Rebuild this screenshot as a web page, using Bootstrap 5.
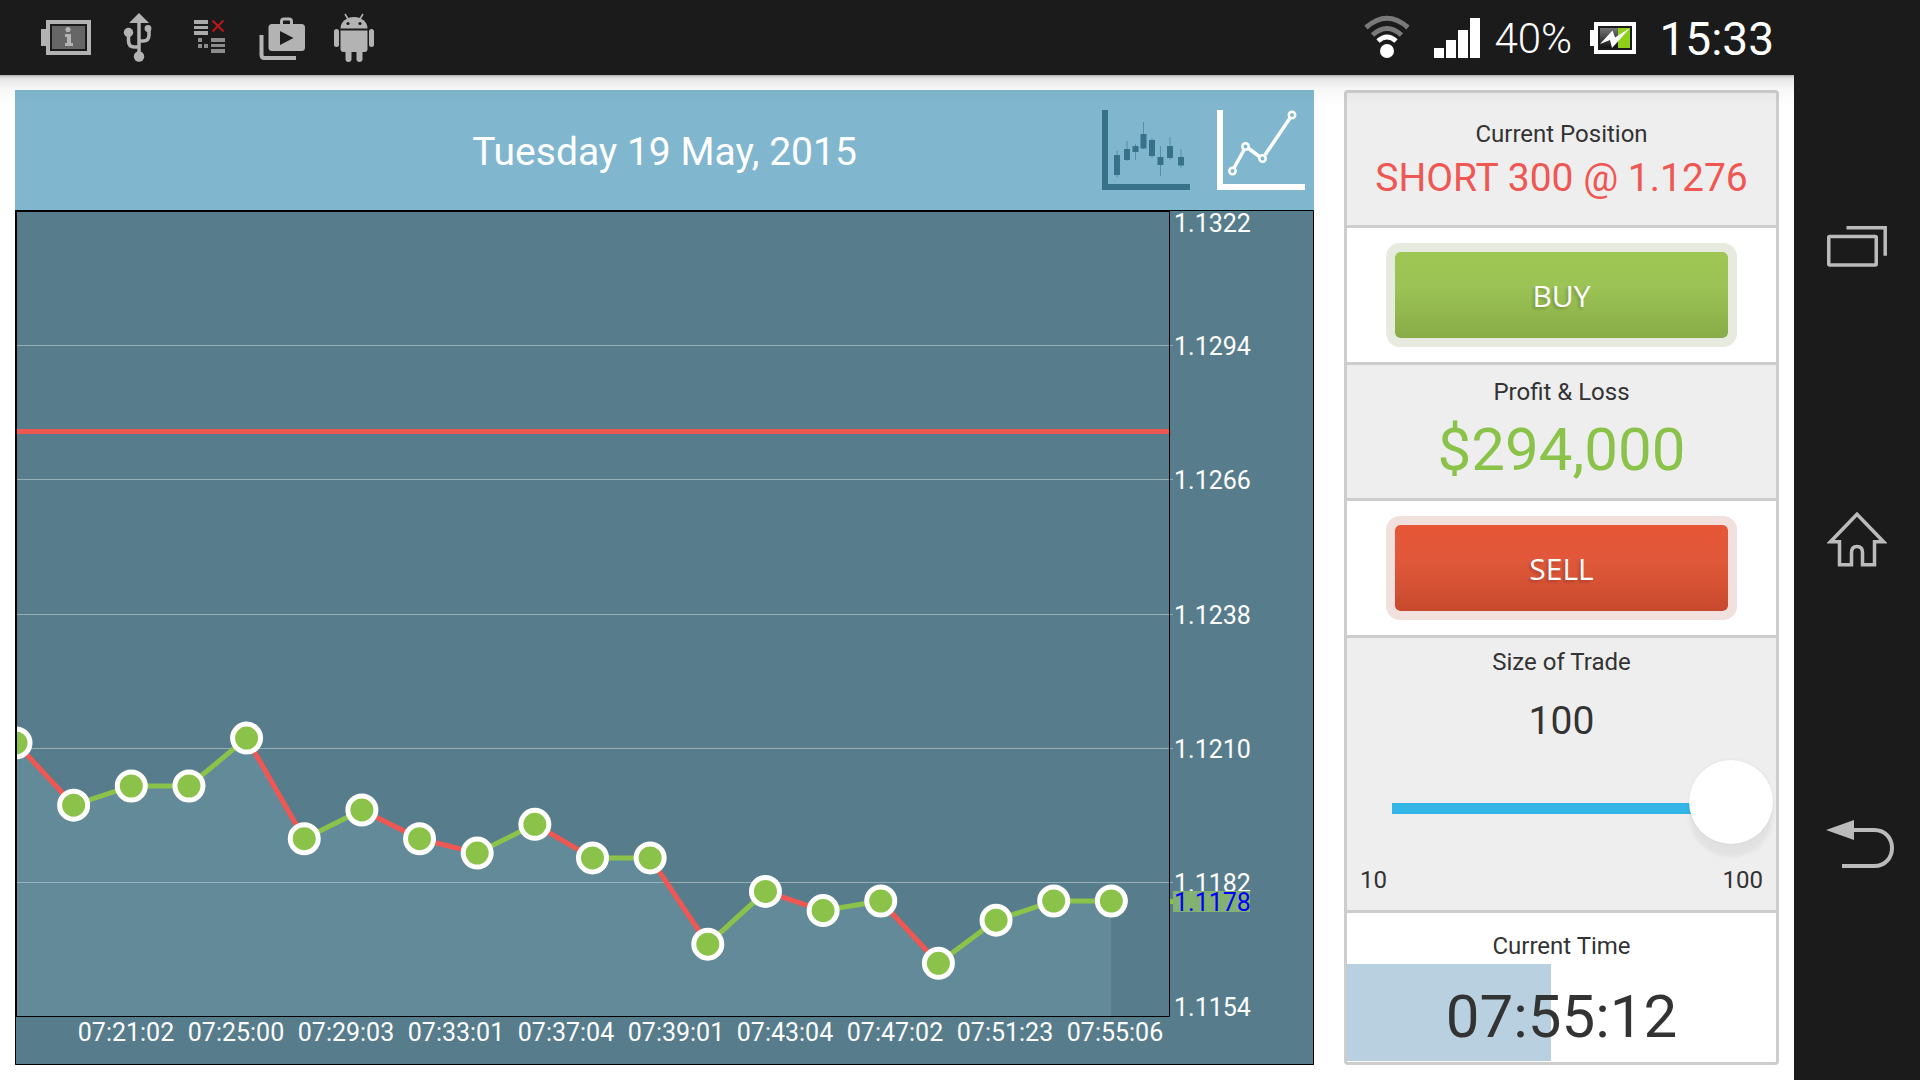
<!DOCTYPE html>
<html lang="en">
<head>
<meta charset="utf-8">
<meta name="viewport" content="width=device-width, initial-scale=1">
<title>Trading</title>
<link href="https://cdn.jsdelivr.net/npm/bootstrap@5.3.0/dist/css/bootstrap.min.css" rel="stylesheet">
<style>
  body { font-family: Roboto, "Liberation Sans", sans-serif; color: #333; background: #fff; }
  svg { display: block; }
  .system-dark { background: #1b1b1b; }
  .status-bar { height: 75px; color: #fff; padding-left: 30px; padding-right: 20px; }
  .battery-text { font-size: 42px; line-height: 48px; width: 77px; font-weight: 300; padding-top: 3px; }
  .clock-text { font-size: 46px; line-height: 48px; padding-top: 3px; }
  .nav-rail { width: 126px; padding-top: 216px; padding-bottom: 196px; }
  .plain-btn { border: 0; padding: 0; background: none; }
  .workspace { padding: 15px; gap: 30px; }
  .workspace::before {
    content: ""; position: absolute; left: 0; right: 0; top: 0; height: 30px; z-index: 2; pointer-events: none;
    background: linear-gradient(rgba(0,0,0,.3), rgba(0,0,0,.1) 3px, rgba(0,0,0,.03) 14px, rgba(0,0,0,0));
  }
  .chart-head { height: 120px; background: #80b7ce; color: #fff; padding: 0 9px; }
  .chart-title { font-size: 39px; line-height: 48px; font-weight: 400; padding-top: 4px; }
  .chart-tools { gap: 27px; }
  .chart-body { background: #577d8c; min-height: 400px; }
  .chart-body svg { position: absolute; inset: 0; }
  .chart-body text { font-size: 25px; fill: #fff; }
  .side-panel { width: 435px; border: 3px solid #cdcdcd; border-radius: 4px; }
  .panel-cell { border-bottom: 3px solid #cdcdcd; }
  .panel-cell:last-child { border-bottom: 0; }
  .shaded { background: #eee; }
  .cell-label { font-size: 24px; line-height: 28px; font-weight: 400; }
  .value-md { font-size: 39px; line-height: 48px; }
  .value-lg { font-size: 60px; line-height: 60px; }
  .loss { color: #ef5753; }
  .gain { color: #8bc34a; }
  .cell-position { height: 135px; padding-top: 27px; gap: 6px; }
  .cell-action { height: 137px; }
  .cell-profit { height: 136px; padding-top: 13px; gap: 14px; }
  .cell-size { height: 275px; padding-top: 10px; }
  .cell-time { padding-top: 19px; gap: 4px; }
  .btn-trade {
    width: 351px; height: 104px; border: 9px solid; border-radius: 14px; padding: 2px 0 0; color: #fff;
    background-clip: padding-box; font-family: "Open Sans", sans-serif;
    font-size: 30px; line-height: 40px; text-shadow: -2px 2px 3px rgba(0,0,0,.2);
  }
  .btn-trade:hover { color: #fff; }
  .btn-buy, .btn-buy:hover { border-color: #e6eadf; background-image: linear-gradient(#9dc653, #9bc355 40%, #88ac47); }
  .btn-sell, .btn-sell:hover { border-color: #f2e0de; background-image: linear-gradient(#e75637, #e0583a 45%, #c7492d); }
  .size-value { margin-top: 21px; }
  .size-slider {
    appearance: none; -webkit-appearance: none; height: 84px; margin: 15px 3px 0 45px;
    background: linear-gradient(#33b5e5, #33b5e5) 0 43px / 90% 11px no-repeat;
  }
  .size-slider::-webkit-slider-thumb {
    -webkit-appearance: none; width: 84px; height: 84px; border-radius: 50%; background: #fff;
    box-shadow: 0 13px 4px rgba(0,0,0,.05), 0 0 3px rgba(0,0,0,.08);
  }
  .size-slider::-moz-range-thumb { width: 84px; height: 84px; border: 0; border-radius: 50%; background: #fff; }
  .range-ends { margin-top: 22px; padding: 0 13px; }
  .clock-box { height: 97px; }
  .clock-fill { position: absolute; left: 0; top: 0; bottom: 0; background: #b9d0e0; }
</style>
<script src="https://cdn.jsdelivr.net/npm/bootstrap@5.3.0/dist/js/bootstrap.bundle.min.js" defer></script>
</head>
<body>
<div class="d-flex min-vh-100">
  <div class="d-flex flex-column flex-grow-1">

    <header class="status-bar system-dark d-flex align-items-center justify-content-between">
      <div class="d-flex">
        <svg width="72" height="75" viewBox="30 0 72 75" aria-hidden="true">
          <path fill="#b3b3b3" d="M41 29h5v-9h45v35H46v-9h-5z"/><path fill="#1b1b1b" d="M50 24h37v27H50z"/><path fill="#666" d="M52 26h33v23H52z"/>
          <circle cx="68" cy="29.500" r="2.600" fill="#b3b3b3"/><path fill="#b3b3b3" d="M65 34h6v9h2v3h-8v-3h2v-6h-2z"/>
        </svg>
        <svg width="72" height="75" viewBox="102 0 72 75" aria-hidden="true">
          <g fill="none" stroke="#b3b3b3" stroke-width="3.500"><path d="M139 18v38"/><path d="M128.500 33v8q0 6 6 6h4.500M149 29v6q0 6-6 6h-4"/></g>
          <g fill="#b3b3b3"><path d="M139 13l10 10h-20z"/><circle cx="139" cy="56.500" r="5.200"/><circle cx="128.500" cy="32.500" r="4.700"/><circle cx="148" cy="28.500" r="3.400"/></g>
        </svg>
        <svg width="72" height="75" viewBox="174 0 72 75" aria-hidden="true">
          <path fill="#aaa" d="M194 20h14v4h-14zM194 26h14v3h-14zM194 31h14v4h-14z"/>
          <path fill="#8c8c8c" d="M198 38h4v4h-4zM198 44h4v4h-4zM204 44h4v4h-4zM211 38h14v4h-14zM211 44h14v3h-14zM211 49h14v4h-14z"/>
          <path stroke="#b91818" stroke-width="2" d="M212.500 20.500l11 11M223.500 20.500l-11 11"/>
        </svg>
        <svg width="72" height="75" viewBox="246 0 72 75" aria-hidden="true">
          <path fill="none" stroke="#b3b3b3" stroke-width="4" d="M261.500 35v20q0 3 3 3H296"/>
          <rect x="268.500" y="24" width="36.500" height="27" rx="3.500" fill="#b3b3b3"/>
          <rect x="281.500" y="19" width="10" height="8" rx="2.500" fill="none" stroke="#b3b3b3" stroke-width="3"/>
          <path fill="#1b1b1b" d="M280 31l13.500 7-13.500 7z"/>
        </svg>
        <svg width="72" height="75" viewBox="318 0 72 75" aria-hidden="true">
          <g fill="#b3b3b3"><path d="M340.500 28.500a13.500 11.500 0 0 1 27 0z"/><path d="M340.500 30.500h27V49q0 3-3 3h-21q-3 0-3-3z"/>
          <rect x="334" y="29" width="5" height="18" rx="2.500"/><rect x="369" y="29" width="5" height="18" rx="2.500"/>
          <rect x="345.500" y="47" width="6" height="15" rx="3"/><rect x="356.500" y="47" width="6" height="15" rx="3"/></g>
          <path stroke="#b3b3b3" stroke-width="1.500" d="M345 14l3 5M363 14l-3 5"/>
          <circle cx="348" cy="23.500" r="1.600" fill="#1b1b1b"/><circle cx="360" cy="23.500" r="1.600" fill="#1b1b1b"/>
        </svg>
      </div>
      <div class="d-flex align-items-center">
        <svg width="134" height="75" viewBox="1361 0 134 75" aria-hidden="true">
          <g fill="none" stroke-width="5"><path stroke="#7a7a7a" d="M1367 27.500q21-18.500 42 0M1373.500 35q14.500-13 29 0"/><path stroke="#fff" d="M1379 41q9-8 18 0"/></g>
          <circle cx="1388" cy="51" r="7" fill="#fff"/>
          <path fill="#fff" d="M1435 48h10v10h-10zM1447 40h10v18h-10zM1459 30h10v28h-10zM1471 18h10v40h-10z"/>
        </svg>
        <span class="battery-text">40%</span>
        <svg width="88" height="75" viewBox="1572 0 88 75" aria-hidden="true">
          <defs><linearGradient id="cell" x2="0" y2="1"><stop stop-color="#777"/><stop offset="1" stop-color="#111"/></linearGradient></defs>
          <path fill="#fff" d="M1591 30h4v-8h42v32h-42v-8h-4z"/><path fill="#1b1b1b" d="M1599 26h34v24h-34z"/>
          <path fill="url(#cell)" d="M1601 28h18v20h-18z"/><path fill="#8fd118" d="M1619 28h12v20h-12z"/>
          <path fill="#fff" d="M1601 44l12.500-13.500 2.500 7 15-9.500-18 20-2-8z"/>
        </svg>
        <span class="clock-text">15:33</span>
      </div>
    </header>

    <main class="workspace d-flex flex-grow-1 position-relative">
      <section class="d-flex flex-column flex-grow-1">
        <div class="chart-head d-flex align-items-center">
          <div class="col"></div>
          <h1 class="chart-title m-0">Tuesday 19 May, 2015</h1>
          <div class="chart-tools col d-flex justify-content-end">
            <button type="button" class="plain-btn" aria-label="Candlestick chart">
              <svg width="88" height="80" viewBox="0 0 88 80">
                <g fill="#37718a"><path d="M0 0h6v74h82v6H0z"/>
                <path d="M12 45h6v20h-6zM22 39h6v11h-6zM30.500 36h6v6h-6zM38.500 24h6v14.500h-6zM47 30h6v16h-6zM55.500 47h6v8h-6zM65 36h6v12h-6zM76 47h6v8.500h-6z"/></g>
                <path stroke="#37718a" stroke-opacity=".55" d="M15 41v26M25 31v20M33.500 34v16M41.500 12v27M50 28v20M58.500 36v30M68 27v23M79 39v19"/>
              </svg>
            </button>
            <button type="button" class="plain-btn" aria-label="Line chart">
              <svg width="88" height="80" viewBox="0 0 88 80">
                <path fill="#fff" d="M0 0h6v74h82v6H0z"/>
                <path fill="none" stroke="#fff" stroke-width="3.500" d="M17 58l10-18M31 38l12 9M48 45L73 8"/>
                <g fill="none" stroke="#fff" stroke-width="2.500"><circle cx="15.500" cy="61" r="3.200"/><circle cx="28.500" cy="36.500" r="3.200"/><circle cx="45.500" cy="48.500" r="3.200"/><circle cx="75" cy="5" r="3.200"/></g>
              </svg>
            </button>
          </div>
        </div>
        <div class="chart-body position-relative flex-grow-1" id="chart"></div>
      </section>

      <aside class="side-panel d-flex flex-column flex-shrink-0 text-center">
        <div class="panel-cell cell-position shaded d-flex flex-column">
          <div class="cell-label">Current Position</div>
          <div class="value-md loss">SHORT 300 @ 1.1276</div>
        </div>
        <div class="panel-cell cell-action d-flex align-items-center justify-content-center">
          <button type="button" class="btn btn-trade btn-buy">BUY</button>
        </div>
        <div class="panel-cell cell-profit shaded d-flex flex-column">
          <div class="cell-label">Profit &amp; Loss</div>
          <div class="value-lg gain">$294,000</div>
        </div>
        <div class="panel-cell cell-action d-flex align-items-center justify-content-center">
          <button type="button" class="btn btn-trade btn-sell">SELL</button>
        </div>
        <div class="panel-cell cell-size shaded d-flex flex-column">
          <label class="cell-label" for="trade-size">Size of Trade</label>
          <output class="value-md size-value" for="trade-size">100</output>
          <input class="size-slider" type="range" id="trade-size" min="10" max="100" value="100">
          <div class="range-ends cell-label d-flex justify-content-between"><span>10</span><span>100</span></div>
        </div>
        <div class="panel-cell cell-time d-flex flex-column flex-grow-1">
          <div class="cell-label">Current Time</div>
          <div class="clock-box position-relative d-flex align-items-center justify-content-center pt-2">
            <div class="clock-fill" style="width:47.5%"></div>
            <div class="value-lg position-relative">07:55:12</div>
          </div>
        </div>
      </aside>
    </main>
  </div>

  <nav class="nav-rail system-dark d-flex flex-column align-items-center justify-content-between flex-shrink-0" aria-label="System">
    <button type="button" class="plain-btn" aria-label="Recent apps">
      <svg width="60" height="60" viewBox="0 -10 60 60"><g fill="none" stroke="#bbb" stroke-width="3.500"><rect x="1.750" y="10.500" width="47.500" height="28.500" rx="1"/><path d="M19.500 1.750h38.700v28"/></g></svg>
    </button>
    <button type="button" class="plain-btn" aria-label="Home">
      <svg width="60" height="60" viewBox="0 -2 60 60"><path fill="none" stroke="#bbb" stroke-width="3.500" d="M30 2.200L3.500 29.750H12.500V52.750H24.500V40.500q0-6 5.500-6t5.500 6V52.750H47.500V29.750H56.500z"/></svg>
    </button>
    <button type="button" class="plain-btn" aria-label="Back">
      <svg width="74" height="80" viewBox="-6 -16 74 80" overflow="visible"><path fill="#bbb" d="M0 10L28 0v20z"/><path fill="none" stroke="#bbb" stroke-width="4" d="M27 10H48C72 10 72 46 48 46H16"/></svg>
    </button>
  </nav>
</div>

<script>
(() => {
  const prices = [1.1211, 1.1198, 1.1202, 1.1202, 1.1212, 1.1191, 1.1197, 1.1191, 1.1188, 1.1194,
                  1.1187, 1.1187, 1.1169, 1.1180, 1.1176, 1.1178, 1.1165, 1.1174, 1.1178, 1.1178];
  const times = ['07:21:02', '07:25:00', '07:29:03', '07:33:01', '07:37:04', '07:39:01', '07:43:04', '07:47:02', '07:51:23', '07:55:06'];
  const ticks = [1.1322, 1.1294, 1.1266, 1.1238, 1.1210, 1.1182, 1.1154];
  const entry = 1.1276, high = 1.1322, low = 1.1154;
  const green = '#8bc34a', red = '#ef5753';
  const box = document.getElementById('chart');

  function draw() {
    const w = box.clientWidth, h = box.clientHeight;
    const right = w - 145, bottom = h - 49;
    const x = i => 1 + i * (right - 1) / 20;
    const y = p => 1 + (high - p) / (high - low) * (bottom - 1);
    const last = prices.length - 1;
    let s = '';
    for (const t of ticks.slice(1, -1)) {
      const gy = Math.round(y(t)) + .5;
      s += `<path stroke="#fff" stroke-opacity=".38" d="M1 ${gy}H${right + 4}"/>`;
    }
    s += `<path fill="#9ccadb" fill-opacity=".17" d="M1 ${bottom}${prices.map((p, i) => `L${x(i)} ${y(p)}`).join('')}V${bottom}z"/>`;
    s += `<path stroke="${red}" stroke-width="5" d="M1 ${Math.round(y(entry)) + .5}H${right}"/>`;
    s += '<g clip-path="url(#plot)">';
    for (let i = 1; i <= last; i++)
      s += `<path stroke="${prices[i] >= prices[i - 1] ? green : red}" stroke-width="5" d="M${x(i - 1)} ${y(prices[i - 1])}L${x(i)} ${y(prices[i])}"/>`;
    prices.forEach((p, i) => s += `<circle cx="${x(i)}" cy="${y(p)}" r="14" fill="${green}" stroke="#fff" stroke-width="5"/>`);
    s += '</g>';
    s += `<path fill="none" stroke="#000" d="M.5 .5H${w - .5}V${h - .5}H.5zM.5 1.500H${right}M1.500 1V${bottom}M${right + .5} 1V${bottom + .5}H1"/>`;
    ticks.forEach(t => {
      const ty = Math.min(Math.max(y(t) + 10, 22), bottom);
      s += `<text x="${right + 5}" y="${Math.round(ty)}">${t.toFixed(4)}</text>`;
    });
    const cy = Math.round(y(prices[last]));
    s += `<path fill="${green}" d="M${right + 1} ${cy - 2}h4v5h-4z"/><path fill="#82b171" d="M${right + 4} ${cy - 10}h77v21h-77z"/>`;
    s += `<text x="${right + 5}" y="${cy + 10}" style="fill:#00f">${prices[last].toFixed(4)}</text>`;
    times.forEach((t, i) => s += `<text text-anchor="middle" x="${Math.round(right * (i + 1.010) / 10.5)}" y="${bottom + 25}">${t}</text>`);
    box.innerHTML = `<svg width="${w}" height="${h}" role="img" aria-label="Price chart"><defs><clipPath id="plot"><path d="M1 0H${right}V${bottom}H1z"/></clipPath></defs>${s}</svg>`;
  }
  draw();
  window.addEventListener('resize', draw);
  document.getElementById('trade-size').addEventListener('input', e => document.querySelector('output').value = e.target.value);
})();
</script>
</body>
</html>
